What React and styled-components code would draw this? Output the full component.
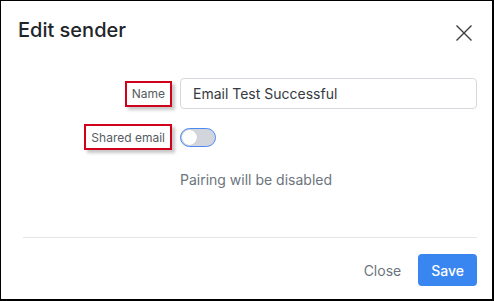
import React from "react";
import styled, { createGlobalStyle } from "styled-components";

const Global = createGlobalStyle`
  html, body { margin: 0; padding: 0; background: #fff; }
  body { font-family: Inter, "Noto Sans", sans-serif; }
  * { box-sizing: border-box; }
`;

const Frame = styled.div`
  width: 494px;
  height: 301px;
  border-style: solid;
  border-color: #000;
  border-width: 1px 2px 2px 1px;
  background: #fff;
  display: flex;
  flex-direction: column;
`;

const Header = styled.div`
  display: flex;
  align-items: center;
  justify-content: space-between;
  padding: 17px 20px 0 17px;
  height: 41px;
`;

const Title = styled.h1`
  margin: 0;
  font-size: 20px;
  line-height: 24px;
  font-weight: 500;
  color: #212529;
`;

const CloseIcon = styled.button`
  width: 16px;
  height: 16px;
  padding: 0;
  border: 0;
  background: none;
  display: flex;
  margin-top: 5px;
  color: #3c3c3c;
`;

const Body = styled.div`
  padding: 36px 15px 0 22px;
  flex: 1;
`;

const Form = styled.div`
  display: grid;
  grid-template-columns: 149px 1fr;
  column-gap: 8px;
  row-gap: 15px;
  align-items: center;
`;

const LabelCell = styled.div`
  display: flex;
  justify-content: flex-end;
`;

const Label = styled.label`
  height: 26px;
  display: flex;
  align-items: center;
  padding: 0 5px;
  border: 2px solid #d0021b;
  box-shadow: 3px 3px 3px rgba(0, 0, 0, 0.22);
  font-size: 12px;
  color: #555b61;
`;

const Input = styled.input`
  width: 100%;
  height: 31px;
  border: 1px solid #d5d9de;
  border-radius: 4px;
  padding: 0 12px;
  font-family: Inter, sans-serif;
  font-size: 14px;
  color: #343a40;
  outline: none;
`;

const Toggle = styled.span`
  width: 36px;
  height: 19px;
  border-radius: 10px;
  border: 1.5px solid #4a8af4;
  background: #d2d6dc;
  display: flex;
  align-items: center;
  padding: 0 1px;
`;

const Knob = styled.span`
  width: 15px;
  height: 15px;
  border-radius: 50%;
  background: #fff;
  box-shadow: 0 0 1px rgba(0, 0, 0, 0.2);
`;

const Note = styled.div`
  grid-column: 2;
  margin-top: 5px;
  font-size: 14px;
  line-height: 20px;
  color: #6c757d;
`;

const Divider = styled.hr`
  margin: 0 15px 0 22px;
  border: 0;
  border-top: 1px solid #e6e6e6;
`;

const Footer = styled.div`
  display: flex;
  justify-content: flex-end;
  align-items: center;
  gap: 5px;
  padding: 16px 15px 13px 22px;
`;

const Button = styled.button`
  height: 32px;
  border: 0;
  border-radius: 4px;
  padding: 0 ${(p) => (p.$primary ? "13px" : "12px")};
  font-family: Inter, sans-serif;
  font-size: 14px;
  font-weight: ${(p) => (p.$primary ? 500 : 400)};
  background: ${(p) => (p.$primary ? "#3a86f1" : "transparent")};
  color: ${(p) => (p.$primary ? "#fff" : "#6c757d")};
`;

export default function App() {
  return (
    <>
      <Global />
      <Frame>
        <Header>
          <Title>Edit sender</Title>
          <CloseIcon aria-label="Close">
            <svg width="16" height="16" viewBox="0 0 16 16">
              <path d="M0.5 0.5 L15.5 15.5 M15.5 0.5 L0.5 15.5" stroke="currentColor" strokeWidth="1.4" fill="none" />
            </svg>
          </CloseIcon>
        </Header>
        <Body>
          <Form>
            <LabelCell>
              <Label>Name</Label>
            </LabelCell>
            <Input defaultValue="Email Test Successful" />
            <LabelCell>
              <Label>Shared email</Label>
            </LabelCell>
            <div>
              <Toggle>
                <Knob />
              </Toggle>
            </div>
            <Note>Pairing will be disabled</Note>
          </Form>
        </Body>
        <Divider />
        <Footer>
          <Button>Close</Button>
          <Button $primary>Save</Button>
        </Footer>
      </Frame>
    </>
  );
}
